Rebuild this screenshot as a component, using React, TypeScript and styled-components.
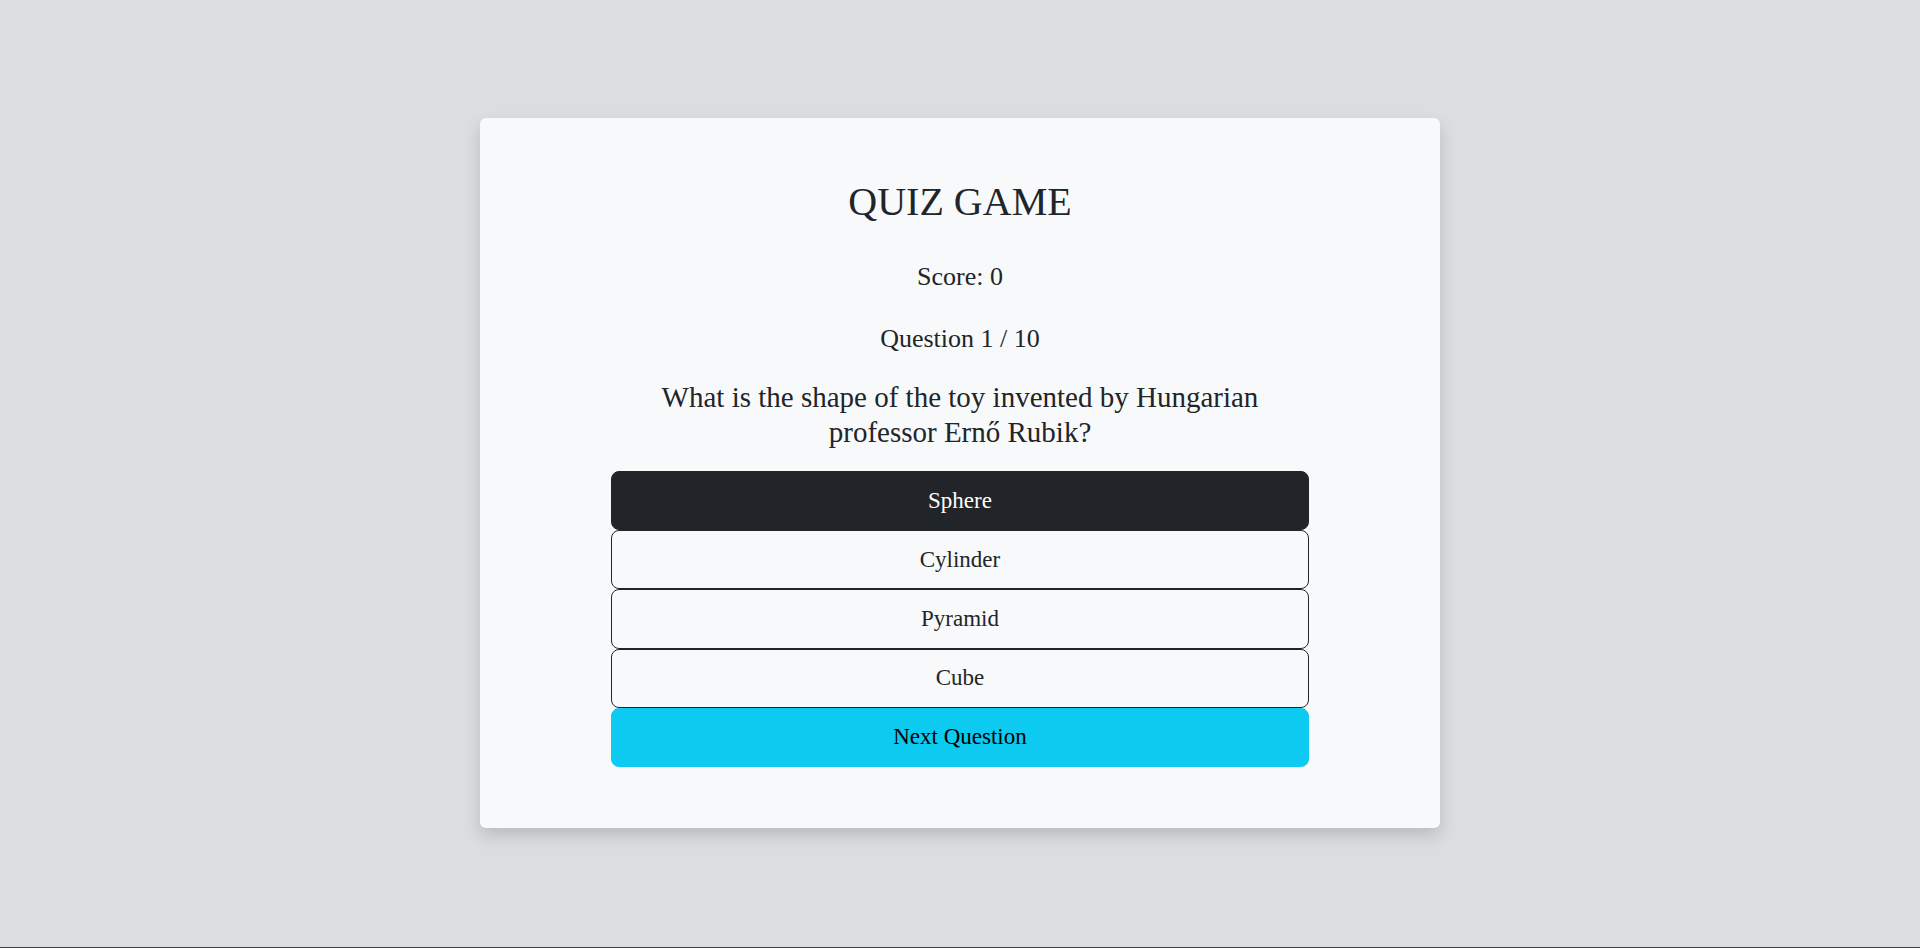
import styled, { createGlobalStyle } from 'styled-components'

const GlobalStyle = createGlobalStyle`
    * {
        box-sizing: border-box;
    }
    body {
        margin: 0;
        background-color: #dcdddf;
        font-family: "Liberation Serif", "Times New Roman", serif;
        color: #212529;
    }
`

const Page = styled.div`
    height: 100vh;
    padding-bottom: 1px;
    display: flex;
    align-items: center;
    justify-content: center;
    border-bottom: 1px solid #3d3e40;
`

const Card = styled.div`
    width: 960px;
    padding: 60px 0 61px;
    background-color: #f8f9fa;
    border-radius: 6px;
    box-shadow: 0 8px 16px rgba(0, 0, 0, 0.15);
    display: flex;
    flex-direction: column;
    align-items: center;
`

const Title = styled.h1`
    margin: 0;
    font-size: 40px;
    font-weight: 400;
    line-height: 48px;
    text-align: center;
`

const Info = styled.p<{ $gap: number }>`
    margin: ${({ $gap }) => $gap}px 0 0;
    font-size: 26px;
    line-height: 39px;
    text-align: center;
`

const QuestionText = styled.h2`
    margin: 22px 0 0;
    max-width: 660px;
    font-size: 29px;
    font-weight: 400;
    line-height: 35px;
    text-align: center;
`

const Answers = styled.div`
    margin-top: 21px;
    width: 698px;
    display: flex;
    flex-direction: column;
`

const Button = styled.button<{ $variant: 'dark' | 'outline' | 'info' }>`
    height: 59.2px;
    width: 100%;
    border-radius: 8px;
    font-family: inherit;
    font-size: 23px;
    cursor: pointer;
    border: 1px solid ${({ $variant }) => ($variant === 'info' ? '#0dcaf0' : '#212529')};
    background-color: ${({ $variant }) =>
        $variant === 'dark' ? '#212529' : $variant === 'info' ? '#0dcaf0' : 'transparent'};
    color: ${({ $variant }) =>
        $variant === 'dark' ? '#ffffff' : $variant === 'info' ? '#000000' : '#212529'};
`

const answers = ['Sphere', 'Cylinder', 'Pyramid', 'Cube']

const App = () => {
  const selected = 0
  return (
        <Page>
            <GlobalStyle />
            <Card>
                <Title>QUIZ GAME</Title>
                <Info $gap={31}>Score: 0</Info>
                <Info $gap={23}>Question 1 / 10</Info>
                <QuestionText>
                    What is the shape of the toy invented by Hungarian professor Ernő Rubik?
                </QuestionText>
                <Answers>
                    {answers.map((answer, i) => (
                        <Button key={answer} $variant={i === selected ? 'dark' : 'outline'}>
                            {answer}
                        </Button>
                    ))}
                    <Button $variant="info">Next Question</Button>
                </Answers>
            </Card>
        </Page>
  )
}

export default App
